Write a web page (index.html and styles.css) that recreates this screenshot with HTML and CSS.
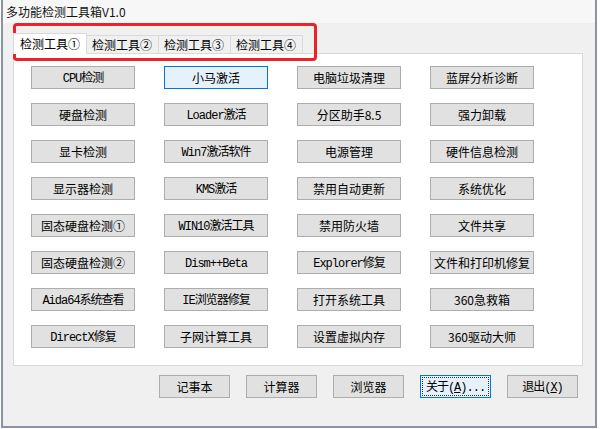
FILE: index.html
```html
<!DOCTYPE html>
<html lang="zh-CN">
<head>
  <meta charset="UTF-8">
  <title>多功能检测工具箱V1.0</title>
  <link rel="stylesheet" href="styles.css">
</head>
<body>

  <div class="window">
    <div class="titlebar">多功能检测工具箱V1.0</div>

    <div class="tabs">
      <div class="tab active">检测工具①</div>
      <div class="tab">检测工具②</div>
      <div class="tab">检测工具③</div>
      <div class="tab">检测工具④</div>
    </div>

    <!-- page du premier onglet -->
    <div class="panel">
      <div class="grid">
        <div class="btn mono">CPU检测</div>
        <div class="btn selected">小马激活</div>
        <div class="btn">电脑垃圾清理</div>
        <div class="btn">蓝屏分析诊断</div>

        <div class="btn">硬盘检测</div>
        <div class="btn mono">Loader激活</div>
        <div class="btn">分区助手8.5</div>
        <div class="btn">强力卸载</div>

        <div class="btn">显卡检测</div>
        <div class="btn mono">Win7激活软件</div>
        <div class="btn">电源管理</div>
        <div class="btn">硬件信息检测</div>

        <div class="btn">显示器检测</div>
        <div class="btn mono">KMS激活</div>
        <div class="btn">禁用自动更新</div>
        <div class="btn">系统优化</div>

        <div class="btn">固态硬盘检测①</div>
        <div class="btn mono">WIN10激活工具</div>
        <div class="btn">禁用防火墙</div>
        <div class="btn">文件共享</div>

        <div class="btn">固态硬盘检测②</div>
        <div class="btn mono">Dism++Beta</div>
        <div class="btn mono">Explorer修复</div>
        <div class="btn">文件和打印机修复</div>

        <div class="btn mono">Aida64系统查看</div>
        <div class="btn mono">IE浏览器修复</div>
        <div class="btn">打开系统工具</div>
        <div class="btn">360急救箱</div>

        <div class="btn mono">DirectX修复</div>
        <div class="btn">子网计算工具</div>
        <div class="btn">设置虚拟内存</div>
        <div class="btn">360驱动大师</div>
      </div>
    </div>

    <div class="footer">
      <div class="btn small">记事本</div>
      <div class="btn small">计算器</div>
      <div class="btn small">浏览器</div>
      <div class="btn small mono focus">关于(<u>A</u>)...</div>
      <div class="btn small mono">退出(<u>X</u>)</div>
    </div>

    <!-- cadre rouge d'annotation -->
    <div class="highlight"></div>
  </div>

</body>
</html>
```

FILE: styles.css
```css
:root {
  --win-bg: #f0f0f0;
  --line: #d9d9d9;
  --btn-bg: #e1e1e1;
  --btn-border: #adadad;
  --blue: #0078d7;
}

body {
  margin: 0;
  background: #fff;
  font-family: "Noto Sans CJK SC", "Noto Sans", sans-serif;
  font-size: 12px;
  color: #000;
}

.window {
  position: relative;
  width: 592px;
  height: 426px;
  margin-left: 1px;
  background: var(--win-bg);
  border: 2px solid #8893a8;
  border-top: none;
}

.titlebar {
  height: 23px;
  line-height: 23px;
  padding-left: 3px;
  font-size: 12px;
  color: #111;
  background: #f7f7f7;
}

.tabs {
  display: flex;
  align-items: flex-end;
  height: 30px;
  padding-left: 10px;
}

.tab {
  height: 17px;
  line-height: 17px;
  padding: 0 6px 0 5px;
  border: 1px solid var(--line);
  border-bottom: none;
  border-left: none;
  background: #f0f0f0;
  font-size: 12px;
  white-space: nowrap;
}

.tab.active {
  height: 20px;
  line-height: 20px;
  padding: 0 6px 0 6px;
  margin-bottom: -1px;
  background: #fff;
  border-left: 1px solid var(--line);
  position: relative;
  z-index: 1;
}

.panel {
  margin-left: 10px;
  width: 568px;
  height: 311px;
  background: #fff;
  border: 1px solid var(--line);
}

.grid {
  display: grid;
  grid-template-columns: repeat(4, 104px);
  column-gap: 29px;
  row-gap: 14px;
  padding: 12px 0 0 17px;
}

.btn {
  box-sizing: border-box;
  height: 23px;
  display: flex;
  align-items: center;
  justify-content: center;
  line-height: 1;
  background: var(--btn-bg);
  border: 1px solid var(--btn-border);
  font-size: 12px;
  white-space: nowrap;
  overflow: hidden;
}

.btn.mono {
  font-family: "Liberation Mono", "Noto Sans CJK SC", monospace;
  letter-spacing: -1px;
  padding-top: 3px;
}

.btn.selected {
  background: #e5f1fb;
  border-color: var(--blue);
}

.footer {
  display: flex;
  gap: 16px;
  justify-content: flex-end;
  padding: 9px 17px 0 0;
}

.btn.small {
  width: 71px;
}

.btn.focus {
  border-color: var(--blue);
  background: #e5f1fb;
  outline: 1px dotted #333;
  outline-offset: -3px;
}

.highlight {
  position: absolute;
  left: 10px;
  top: 23px;
  width: 298px;
  height: 32px;
  border: 3px solid #eb2227;
  border-radius: 4px;
}
```
